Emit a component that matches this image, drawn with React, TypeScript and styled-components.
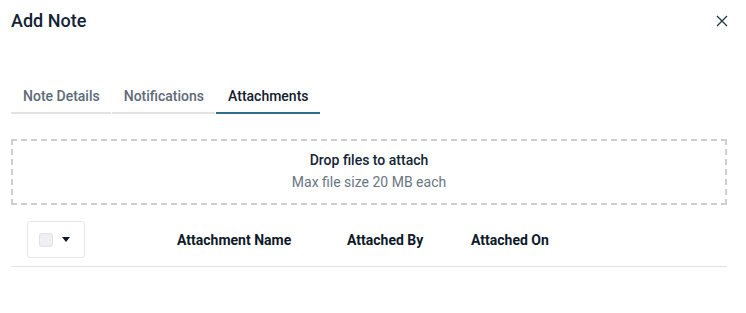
import React, { useState } from "react";
import styled, { createGlobalStyle } from "styled-components";

const Global = createGlobalStyle`
  html, body { margin: 0; padding: 0; background: #ffffff; }
  body { font-family: Roboto, "Liberation Sans", Arial, sans-serif; -webkit-font-smoothing: antialiased; }
  * { box-sizing: border-box; }
`;

const Dialog = styled.div`
  width: 746px;
  padding: 0 19px 0 11px;
  display: flex;
  flex-direction: column;
`;

const Header = styled.div`
  display: flex;
  align-items: center;
  justify-content: space-between;
  height: 42px;
`;

const Title = styled.h1`
  margin: 0;
  font-size: 18px;
  line-height: 24px;
  font-weight: 500;
  color: #132334;
`;

const CloseButton = styled.button`
  border: none;
  background: none;
  padding: 0;
  width: 13px;
  height: 13px;
  margin-right: -1px;
  display: flex;
  align-items: center;
  justify-content: center;
  cursor: pointer;
`;

const TabList = styled.div`
  display: flex;
  gap: 1px;
  margin-top: 42px;
`;

const Tab = styled.button<{ $active?: boolean }>`
  border: none;
  background: none;
  font-family: inherit;
  font-size: 14px;
  line-height: 20px;
  font-weight: 500;
  padding: 2px 11px 6px 12px;
  color: ${(p) => (p.$active ? "#14202e" : "#5e6a78")};
  border-bottom: 2px solid ${(p) => (p.$active ? "#2c6e8c" : "#e3e3e3")};
  cursor: pointer;
`;

const DropZone = styled.div`
  margin-top: 25px;
  border: 2px dashed #cfcfcf;
  padding: 8px 0 10px;
  display: flex;
  flex-direction: column;
  align-items: center;
`;

const DropTitle = styled.div`
  font-size: 14px;
  line-height: 22px;
  font-weight: 500;
  color: #152536;
`;

const DropHint = styled.div`
  font-size: 14px;
  line-height: 22px;
  font-weight: 400;
  color: #6a7683;
`;

const HeaderRow = styled.div`
  display: grid;
  grid-template-columns: 166px 170px 124px 1fr;
  align-items: center;
  padding: 16px 0 8px;
  border-bottom: 1px solid #e4e4e4;
`;

const SelectButton = styled.div`
  margin-left: 16px;
  width: 58px;
  height: 37px;
  border: 1px solid #e6e6e6;
  border-radius: 3px;
  display: flex;
  align-items: center;
  padding-left: 11px;
  gap: 9px;
`;

const CheckBox = styled.span`
  width: 14px;
  height: 14px;
  border: 1px solid #dfe2e6;
  background: #eef0f3;
  border-radius: 3px;
  display: block;
`;

const Caret = styled.span`
  width: 0;
  height: 0;
  border-left: 4px solid transparent;
  border-right: 4px solid transparent;
  border-top: 5px solid #111a26;
  display: block;
`;

const ColHead = styled.div`
  font-size: 14px;
  line-height: 20px;
  font-weight: 700;
  color: #0e1a2a;
`;

export default function App() {
  const [tab, setTab] = useState("Attachments");
  const tabs = ["Note Details", "Notifications", "Attachments"];
  return (
    <>
      <Global />
      <Dialog>
        <Header>
          <Title>Add Note</Title>
          <CloseButton aria-label="Close">
            <svg width="12" height="12" viewBox="0 0 12 12">
              <path d="M1 1L11 11M11 1L1 11" stroke="#233547" strokeWidth="1.3" fill="none" />
            </svg>
          </CloseButton>
        </Header>
        <TabList>
          {tabs.map((t) => (
            <Tab key={t} $active={tab === t} onClick={() => setTab(t)}>
              {t}
            </Tab>
          ))}
        </TabList>
        <DropZone>
          <DropTitle>Drop files to attach</DropTitle>
          <DropHint>Max file size 20 MB each</DropHint>
        </DropZone>
        <HeaderRow>
          <SelectButton>
            <CheckBox />
            <Caret />
          </SelectButton>
          <ColHead>Attachment Name</ColHead>
          <ColHead>Attached By</ColHead>
          <ColHead>Attached On</ColHead>
        </HeaderRow>
      </Dialog>
    </>
  );
}
